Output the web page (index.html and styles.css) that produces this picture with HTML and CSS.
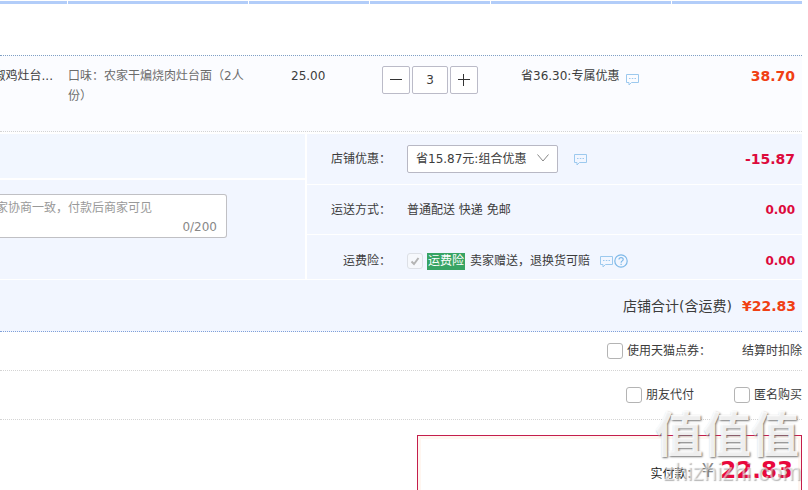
FILE: index.html
```html
<!DOCTYPE html>
<html lang="zh-CN">
<head>
  <meta charset="UTF-8" />
  <meta name="viewport" content="width=device-width, initial-scale=1.0"/>
  <title>确认订单</title>
  <link rel="stylesheet" href="styles.css">
</head>
<body>

  <svg class="sprite" aria-hidden="true">
    <symbol id="icon-chat" viewBox="0 0 13 13">
      <path d="M.5 1.500h12v8h-7l-2.500 2.500v-2.500h-2.500z" fill="none" stroke="#9cc9ee"/>
      <path d="M3 5.500h1.500M5.800 5.500h1.500M8.500 5.500h1.500" stroke="#9cc9ee"/>
    </symbol>
    <symbol id="icon-help" viewBox="0 0 14 14">
      <circle cx="7" cy="7" r="6.200" fill="none" stroke="#7db8e8" stroke-width="1.200"/>
      <path d="M5 5.600C5 2.900 9.200 3 9.200 5.400 9.200 6.900 7.100 6.900 7.100 8.700M7.100 9.700v1.300" fill="none" stroke="#7db8e8" stroke-width="1.200"/>
    </symbol>
  </svg>

  <main class="page">

    <div class="columns">
      <span></span><span></span><span></span><span></span><span></span><span></span>
    </div>

    <section class="item">
      <a href="#" class="item-title">椒鸡灶台...</a>
      <p class="item-sku">口味：农家干煸烧肉灶台面（2人份）</p>
      <span class="item-price">25.00</span>
      <div class="amount">
        <button type="button" aria-label="减少"><svg width="12" height="12" viewBox="0 0 12 12"><path d="M0 5.500h12" stroke="#333"/></svg></button>
        <input type="text" value="3" aria-label="数量" />
        <button type="button" aria-label="增加"><svg width="12" height="12" viewBox="0 0 12 12"><path d="M0 5.500h12M5.500 0v12" stroke="#333"/></svg></button>
      </div>
      <div class="item-promo">省36.30:专属优惠<svg class="icon icon-low"><use href="#icon-chat"/></svg></div>
      <strong class="price price-orange">38.70</strong>
    </section>

    <section class="order">
      <div class="order-left">
        <div class="blank"></div>
        <div class="memo">
          <label class="memo-box">
            <input type="text" placeholder="家协商一致，付款后商家可见" aria-label="给卖家留言" />
            <span class="count">0/200</span>
          </label>
        </div>
      </div>

      <div class="order-right">
        <div class="line">
          <label class="line-label" for="promo">店铺优惠：</label>
          <div class="select">
            <select id="promo">
              <option>省15.87元:组合优惠</option>
            </select>
            <svg class="arrow" viewBox="0 0 12 8"><path d="M.5 .5L6 7 11.500 .5" fill="none" stroke="#888"/></svg>
          </div>
          <svg class="icon icon-gap"><use href="#icon-chat"/></svg>
          <strong class="price">-15.87</strong>
        </div>
        <div class="line line-mid">
          <span class="line-label">运送方式：</span>
          <span>普通配送 快递 免邮</span>
          <strong class="price price-small">0.00</strong>
        </div>
        <div class="line line-last">
          <span class="line-label">运费险：</span>
          <input type="checkbox" id="insurance" class="check check-disabled" checked disabled />
          <label for="insurance" class="insurance"><span class="tag">运费险</span>卖家赠送，退换货可赔</label>
          <svg class="icon"><use href="#icon-chat"/></svg>
          <svg class="icon-help"><use href="#icon-help"/></svg>
          <strong class="price price-small">0.00</strong>
        </div>
      </div>
    </section>

    <section class="total">
      <span>店铺合计(含运费)</span>
      <strong class="price-orange">¥22.83</strong>
    </section>

    <div class="option-row">
      <label><input type="checkbox" class="check" />使用天猫点券：</label>
      <span class="option-note">结算时扣除</span>
    </div>

    <div class="option-row option-tall">
      <label><input type="checkbox" class="check" />朋友代付</label>
      <label class="option-next"><input type="checkbox" class="check" />匿名购买</label>
    </div>

    <section class="pay">
      <span class="pay-label">实付款：</span>
      <span class="pay-sign">¥</span>
      <strong class="pay-price">22.83</strong>
      <div class="watermark" aria-hidden="true">
        <div class="mark-name">值值值</div>
        <div class="mark-site">zhizhizhi.com</div>
      </div>
    </section>

  </main>

</body>
</html>
```
FILE: styles.css
```css
/* === Global Styles === */
* {
  box-sizing: border-box;
}

html {
  overflow: hidden;
}

body {
  margin: 0;
  font-family: "DejaVu Sans", "Noto Sans CJK SC", sans-serif;
  font-size: 12px;
  line-height: 20px;
  color: #3c3c3c;
  background-color: #fff;
}

input,
select,
button {
  margin: 0;
  font: inherit;
  color: inherit;
}

.sprite {
  display: none;
}

.page {
  margin-right: 6px;
}

/* === Column bar === */
.columns {
  display: grid;
  grid-template-columns: 67px 180px 120px 120px 180px 1fr;
  gap: 1px;
  padding-top: 1px;
  height: 55px;
}

.columns span {
  height: 3px;
  background-color: #b2cdf9;
}

/* === Item === */
.item {
  display: grid;
  grid-template-columns: 68px 223px 91px 139px 1fr auto;
  align-items: start;
  height: 77px;
  padding: 10px 7px 0 0;
  border-top: 1px dotted #80a0c4;
  border-bottom: 1px dotted #d4d4d4;
  background-color: #fbfcff;
}

.item-title {
  display: flex;
  justify-content: flex-end;
  padding-right: 15px;
  overflow: hidden;
  white-space: nowrap;
  color: #3c3c3c;
  text-decoration: none;
}

.item-sku {
  margin: 0;
  padding-right: 40px;
  color: #6c6c6c;
}

.amount {
  display: flex;
  gap: 2px;
}

.amount button,
.amount input {
  width: 28px;
  height: 28px;
  padding: 0;
  border: 1px solid #bbbbc8;
  border-radius: 2px;
  background-color: #fff;
  text-align: center;
}

.amount input {
  width: 36px;
}

.amount svg {
  display: block;
  margin: auto;
}

.item-promo {
  display: flex;
  align-items: center;
}

.price {
  margin-left: auto;
  font-size: 14px;
  color: #dd0a3c;
}

.price-small {
  font-size: 12px;
}

.price-orange {
  font-size: 14px;
  color: #f04014;
}

.icon {
  width: 13px;
  height: 13px;
}

.icon-low {
  margin: 6px 0 0 7px;
}

.icon-gap {
  margin-left: 16px;
}

.icon-help {
  width: 14px;
  height: 14px;
  margin-left: 1px;
}

/* === Order === */
.order {
  display: grid;
  grid-template-columns: 305px 1fr;
  gap: 2px;
  padding: 2px 0 1px;
}

.order-left {
  display: flex;
  flex-direction: column;
  gap: 2px;
}

.blank {
  height: 44px;
  background-color: #f2f7ff;
}

.memo {
  flex: 1;
  padding-top: 14px;
  background-color: #f2f6ff;
}

.memo-box {
  display: block;
  width: 227px;
  height: 44px;
  padding: 3px 9px 0 0;
  border: 1px solid #c0c0c4;
  border-left: 0;
  border-radius: 0 3px 3px 0;
  background-color: #fff;
}

.memo-box input {
  display: block;
  width: 100%;
  height: 20px;
  padding: 0;
  border: 0;
  background: none;
}

.memo-box input::placeholder {
  color: #999;
  text-indent: -4px;
}

.count {
  display: block;
  line-height: 18px;
  text-align: right;
  color: #888;
}

.order-right {
  display: grid;
  gap: 1px;
}

.line {
  display: flex;
  align-items: center;
  height: 50px;
  padding-right: 7px;
  background-color: #f2f6ff;
}

.line-mid {
  height: 49px;
}

.line-last {
  height: 44px;
  padding-top: 8px;
}

.line-label {
  width: 100px;
  padding-right: 16px;
  text-align: right;
}

.select {
  position: relative;
}

.select select {
  display: block;
  width: 151px;
  height: 28px;
  padding: 0 8px;
  border: 1px solid #b8b8c4;
  border-radius: 2px;
  background-color: #fff;
  appearance: none;
}

.arrow {
  position: absolute;
  top: 9px;
  right: 9px;
  width: 12px;
  height: 8px;
  pointer-events: none;
}

.check {
  appearance: none;
  width: 16px;
  height: 16px;
  border: 1px solid #b4b4b4;
  border-radius: 3px;
  background-color: #fff;
}

.check-disabled {
  border-color: #dde0e6;
  background: #f6f8fc url("data:image/svg+xml,%3Csvg xmlns='http://www.w3.org/2000/svg' viewBox='0 0 14 14'%3E%3Cpath d='M3.500 7.500l2.500 2.500 4.500-6' fill='none' stroke='%23b4b4b4' stroke-width='2'/%3E%3C/svg%3E");
}

.insurance {
  margin: 0 10px 0 4px;
}

.tag {
  display: inline-block;
  margin-right: 5px;
  padding: 0 1px;
  line-height: 17px;
  color: #fff;
  background-color: #38a464;
}

/* === Total === */
.total {
  display: flex;
  align-items: center;
  justify-content: flex-end;
  gap: 10px;
  height: 52px;
  padding-right: 6px;
  border-bottom: 1px dotted #80a0d8;
  font-size: 14px;
  background-color: #f2f6ff;
}

/* === Options === */
.option-row {
  display: flex;
  align-items: center;
  justify-content: flex-end;
  height: 39px;
  border-bottom: 1px dotted #d4d4d4;
}

.option-tall {
  height: 49px;
}

.option-row label {
  display: flex;
  align-items: center;
  gap: 4px;
}

.option-note {
  margin-left: 31px;
}

.option-row .option-next {
  margin-left: 40px;
}

/* === Payment === */
.pay {
  position: relative;
  display: flex;
  align-items: center;
  justify-content: flex-end;
  width: 385px;
  height: 70px;
  margin: 15px 0 0 auto;
  padding-right: 8px;
  border: 1px solid #c41e4c;
  box-shadow: inset 0 0 0 3px #fff6f0;
}

.pay-label {
  padding-top: 8px;
  color: #222;
}

.pay-sign {
  margin-left: 3px;
  font-size: 20px;
  color: #888;
}

.pay-price {
  margin-left: 6px;
  font-size: 23px;
  color: #e8083c;
}

/* === Watermark === */
.watermark {
  position: absolute;
  top: -26px;
  right: 0;
  text-align: right;
  color: rgba(255, 255, 255, 0.5);
  text-shadow: 1px 1px 1px rgba(110, 110, 110, 0.5);
}

.mark-name {
  padding-right: 2px;
  font-size: 48px;
  font-weight: bold;
  line-height: 50px;
  color: rgba(255, 255, 255, 0.9);
  text-shadow: 1px 1px 2px #777;
}

.mark-site {
  font-family: "Liberation Sans", sans-serif;
  font-size: 23px;
  line-height: 24px;
}
```
